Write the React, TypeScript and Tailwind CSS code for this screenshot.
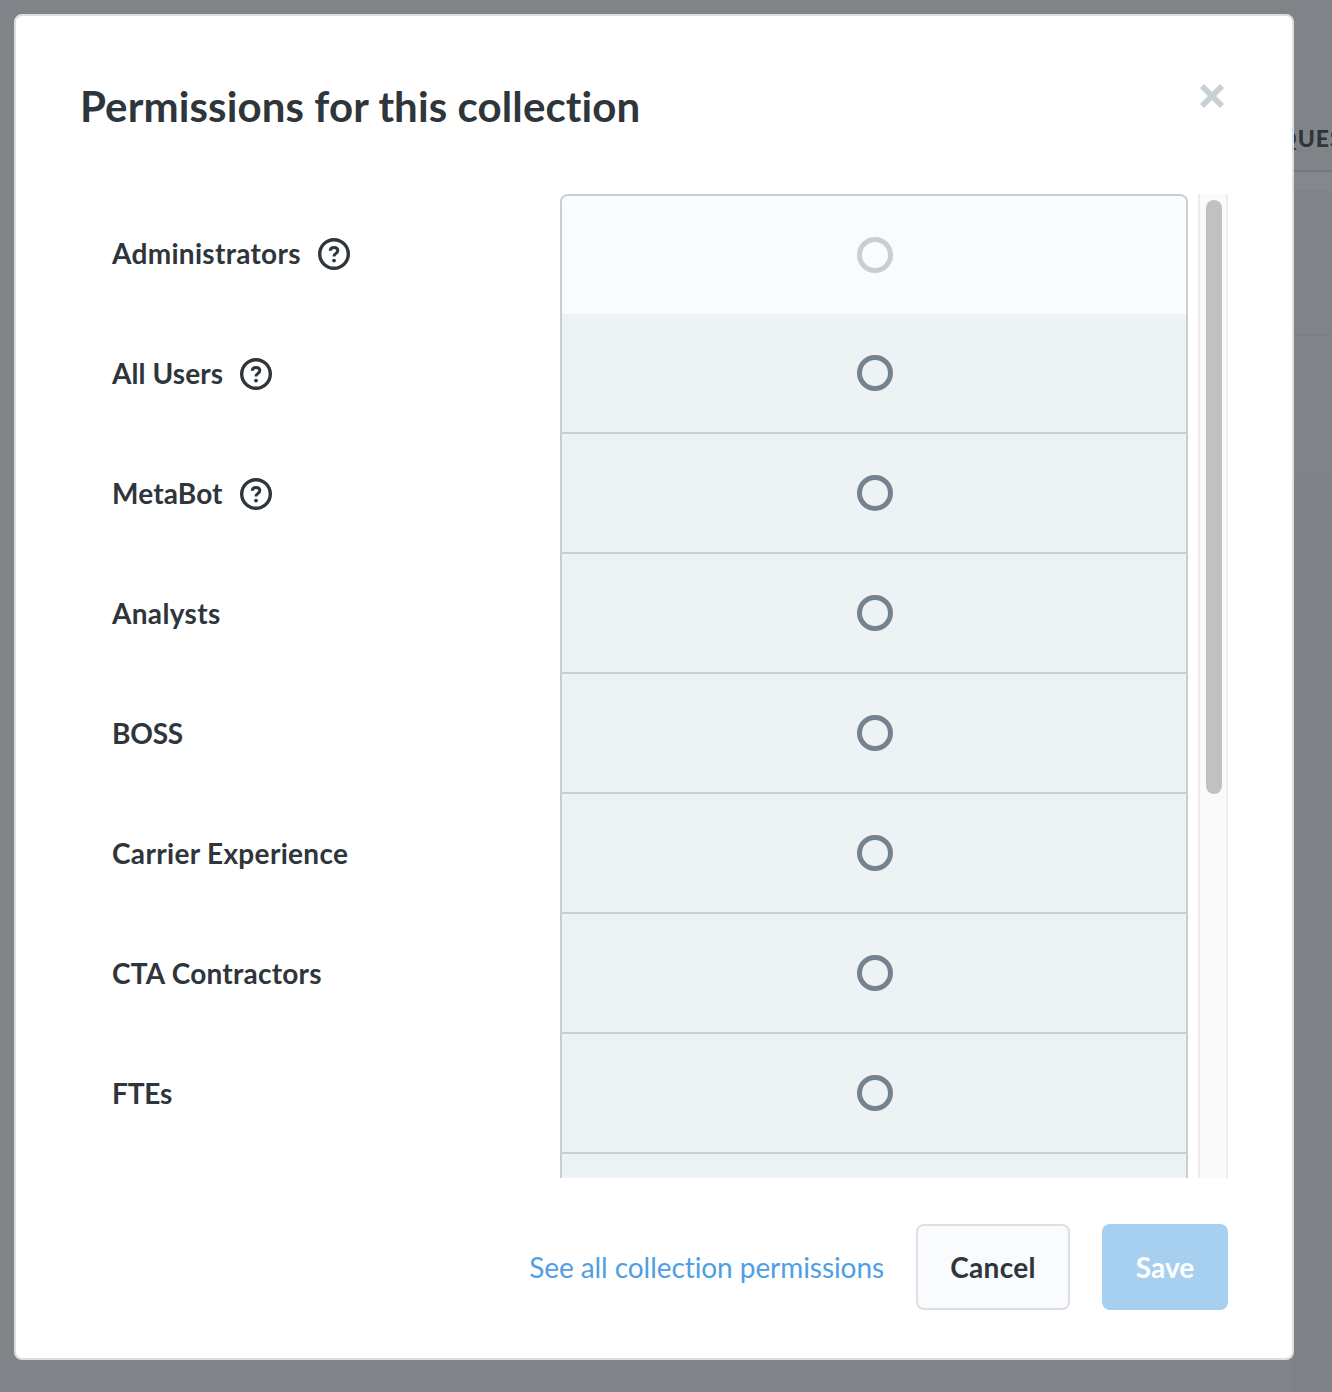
import React from "react";

const rows: { name: string; help?: boolean; track: string }[] = [
  { name: "Administrators", help: true, track: "tracking-[0.3px]" },
  { name: "All Users", help: true, track: "tracking-[0.1px]" },
  { name: "MetaBot", help: true, track: "tracking-[0.15px]" },
  { name: "Analysts", track: "tracking-[0.33px]" },
  { name: "BOSS", track: "tracking-[-0.2px]" },
  { name: "Carrier Experience", track: "tracking-[0.33px]" },
  { name: "CTA Contractors", track: "tracking-[0.25px]" },
  { name: "FTEs", track: "tracking-[-0.2px]" },
];

const cells = [1, 2, 3, 4, 5, 6, 7, 8];

function Help() {
  return (
    <svg width="32" height="32" viewBox="0 0 32 32" fill="none" className="ml-[17px] shrink-0">
      <circle cx="16" cy="16" r="14.3" stroke="#2e353b" strokeWidth="3.4" />
      <path d="M12.2 12.8c.1-2.2 1.7-3.4 3.8-3.4 2.2 0 3.8 1.2 3.8 3.2 0 1.4-.8 2.2-1.9 2.9-1.2.8-1.9 1.4-1.9 2.9" stroke="#2e353b" strokeWidth="3" />
      <circle cx="16" cy="22.6" r="1.9" fill="#2e353b" />
    </svg>
  );
}

export default function App() {
  return (
    <div className="relative w-[1332px] h-[1392px] overflow-hidden bg-[#808488] font-['Lato','Noto_Sans',sans-serif]">
      <div className="ml-[1294px] h-[1392px] flex flex-col overflow-hidden">
        <div className="h-[172px] flex items-end border-b-2 border-[#75797d] pb-[17px]">
          <span className="text-[#2f353a] text-[23px] leading-[30px] font-black tracking-[1px] whitespace-nowrap -ml-[16px]">QUES</span>
        </div>
        <div className="h-[18px] bg-[#84888c]" />
        <div className="h-[146px] border-b-2 border-[#7c8084]" />
        <div className="h-[142px]" />
        <div className="flex-1 bg-[#7e8286]" />
      </div>

      <div className="absolute left-[14px] top-[14px] w-[1280px] h-[1346px] bg-white border-2 border-[#dcdfe2] rounded-[8px] flex flex-col">
        <div className="h-[178px] pl-[64px] pr-[67px] flex items-start justify-between">
          <h2 className="mt-[60px] text-[42px] leading-[60px] font-bold tracking-[0.11px] text-[#2e353b] whitespace-nowrap">Permissions for this collection</h2>
          <svg width="26" height="26" viewBox="0 0 26 26" className="mt-[67px]" fill="none">
            <path d="M3 3L23 23M23 3L3 23" stroke="#c8d0d5" strokeWidth="6" />
          </svg>
        </div>

        <div className="h-[984px] flex overflow-hidden pr-[64px]">
          <div className="w-[544px] shrink-0 pl-[96px]">
            {rows.map((r) => (
              <div key={r.name} className="h-[120px] flex items-center">
                <span className={"-mt-[2px] text-[28px] font-bold text-[#2e353b] whitespace-nowrap " + r.track}>{r.name}</span>
                {r.help ? <Help /> : null}
              </div>
            ))}
          </div>
          <div className="w-[628px] shrink-0">
            <div className="border-2 border-b-0 border-[#c7ced4] rounded-t-[8px] overflow-hidden">
              <div className="h-[118px] bg-[#f9fbfc] flex items-center justify-center">
                <div className="w-[36px] h-[36px] ml-[2px] rounded-full border-[5px] border-[#c7ced4]" />
              </div>
              {cells.map((c) => (
                <div key={c} className="h-[120px] bg-[#edf2f5] border-b-2 border-[#c7ced4] flex items-center justify-center">
                  <div className="w-[36px] h-[36px] ml-[2px] rounded-full border-[5px] border-[#74838f]" />
                </div>
              ))}
            </div>
          </div>
          <div className="ml-[10px] w-[30px] shrink-0 bg-[#fafafa] border-x-2 border-[#ececec] pt-[6px] pl-[6px]">
            <div className="w-[16px] h-[594px] rounded-full bg-[#c1c1c1]" />
          </div>
        </div>

        <div className="flex-1 pr-[64px] pt-[46px] flex items-start justify-end">
          <span className="self-start mt-[23px] text-[28px] leading-[40px] tracking-[-0.07px] text-[#509ee3] whitespace-nowrap">See all collection permissions</span>
          <button className="ml-[32px] w-[154px] h-[86px] rounded-[8px] border-2 border-[#dcdfe3] bg-[#f9fbfc] text-[28px] font-bold tracking-[0.3px] text-[#2e353b]">Cancel</button>
          <button className="ml-[32px] w-[126px] h-[86px] rounded-[8px] bg-[#a7d0f0] text-[28px] font-bold text-white">Save</button>
        </div>
      </div>
    </div>
  );
}
